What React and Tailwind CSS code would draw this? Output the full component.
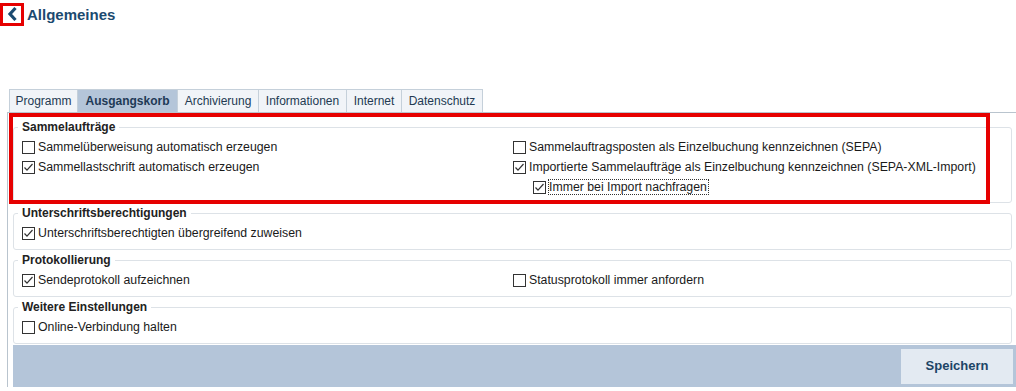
import React from 'react';

const tabs = [
  { label: 'Programm', w: 'w-[69px]' },
  { label: 'Ausgangskorb', w: 'w-[101px]', active: true },
  { label: 'Archivierung', w: 'w-[82px]' },
  { label: 'Informationen', w: 'w-[89px]' },
  { label: 'Internet', w: 'w-[56px]' },
  { label: 'Datenschutz', w: 'w-[82px]' },
];

function Box({ checked }) {
  return (
    <span className="w-[13px] h-[13px] shrink-0 border border-[#333] bg-white flex items-center justify-center">
      {checked && (
        <svg width="11" height="11" viewBox="0 0 11 11">
          <polyline points="1.5,5.5 4,8.2 9.5,2" fill="none" stroke="#333" strokeWidth="1.2" />
        </svg>
      )}
    </span>
  );
}

function Check({ label, checked, focus }) {
  return (
    <label className="h-[20px] flex items-center gap-[2px] text-[12.3px] text-[#1a1a1a]">
      <Box checked={checked} />
      {focus ? (
        <span className="border border-dotted border-[#333] leading-[14px] pr-[1px]">{label}</span>
      ) : (
        <span className="pl-[1px]">{label}</span>
      )}
    </label>
  );
}

function Group({ title, children, pb = 'pb-[6px]' }) {
  return (
    <fieldset className={`border border-[#dde2e7] rounded-[3px] mr-[4px] px-[8px] ${pb}`}>
      <legend className="-ml-[4px] px-[4px] h-[14px] leading-[14px] text-[12px] font-bold text-[#222]">{title}</legend>
      <div className="pt-[3px] grid grid-cols-[491px_1fr]">{children}</div>
    </fieldset>
  );
}

export default function App() {
  return (
    <div className="w-[1016px] h-[391px] bg-white overflow-hidden relative" style={{ fontFamily: '"Liberation Sans", Arial, sans-serif' }}>
      <header className="flex items-center pt-[3px]">
        <button className="relative w-[24px] h-[23px]">
          <svg width="24" height="23" viewBox="0 0 24 23">
            <polyline points="15.5,5 10,11 15.5,17" fill="none" stroke="#1b4a70" strokeWidth="3.2" />
          </svg>
          <span className="absolute inset-0 border-[3px] border-[#e60000]" />
        </button>
        <h1 className="ml-[3px] text-[15px] font-bold text-[#1b4a70] leading-[20px]">Allgemeines</h1>
      </header>

      <div className="pl-[7px] mt-[63px]">
        <div className="flex ml-[2px]">
          {tabs.map((t) => (
            <div
              key={t.label}
              className={`${t.w} h-[23px] -ml-px first:ml-0 border border-b-0 border-[#c5d0da] flex items-center justify-center text-[12px] ${
                t.active ? 'bg-[#b4c5d9] font-bold text-[#1e3a56]' : 'bg-[#f1f4f8] text-[#233a52]'
              }`}
            >
              {t.label}
            </div>
          ))}
        </div>

        <div className="relative border-l border-t border-[#b9c4ce] pl-[5px] pt-[7px] flex flex-col">
          <div className="flex flex-col gap-[3px]">
            <Group title="Sammelaufträge" pb="pb-[5px]">
              <Check label="Sammelüberweisung automatisch erzeugen" />
              <Check label="Sammelauftragsposten als Einzelbuchung kennzeichnen (SEPA)" />
              <Check label="Sammellastschrift automatisch erzeugen" checked />
              <Check label="Importierte Sammelaufträge als Einzelbuchung kennzeichnen (SEPA-XML-Import)" checked />
              <div />
              <div className="pl-[20px]">
                <Check label="Immer bei Import nachfragen" checked focus />
              </div>
            </Group>
            <Group title="Unterschriftsberechtigungen">
              <Check label="Unterschriftsberechtigten übergreifend zuweisen" checked />
            </Group>
            <Group title="Protokollierung">
              <Check label="Sendeprotokoll aufzeichnen" checked />
              <Check label="Statusprotokoll immer anfordern" />
            </Group>
            <Group title="Weitere Einstellungen">
              <Check label="Online-Verbindung halten" />
            </Group>
          </div>

          <div className="mt-[1px] h-[42px] bg-[#b4c5d9] flex items-center justify-end pr-[3px]">
            <button className="w-[112px] h-[35px] bg-[#e3eaf2] text-[13px] font-bold text-[#1c4466]">Speichern</button>
          </div>

          <div className="absolute left-[1px] top-0 w-[981px] h-[91px] border-[4px] border-[#e60000] pointer-events-none" />
        </div>
      </div>
    </div>
  );
}
